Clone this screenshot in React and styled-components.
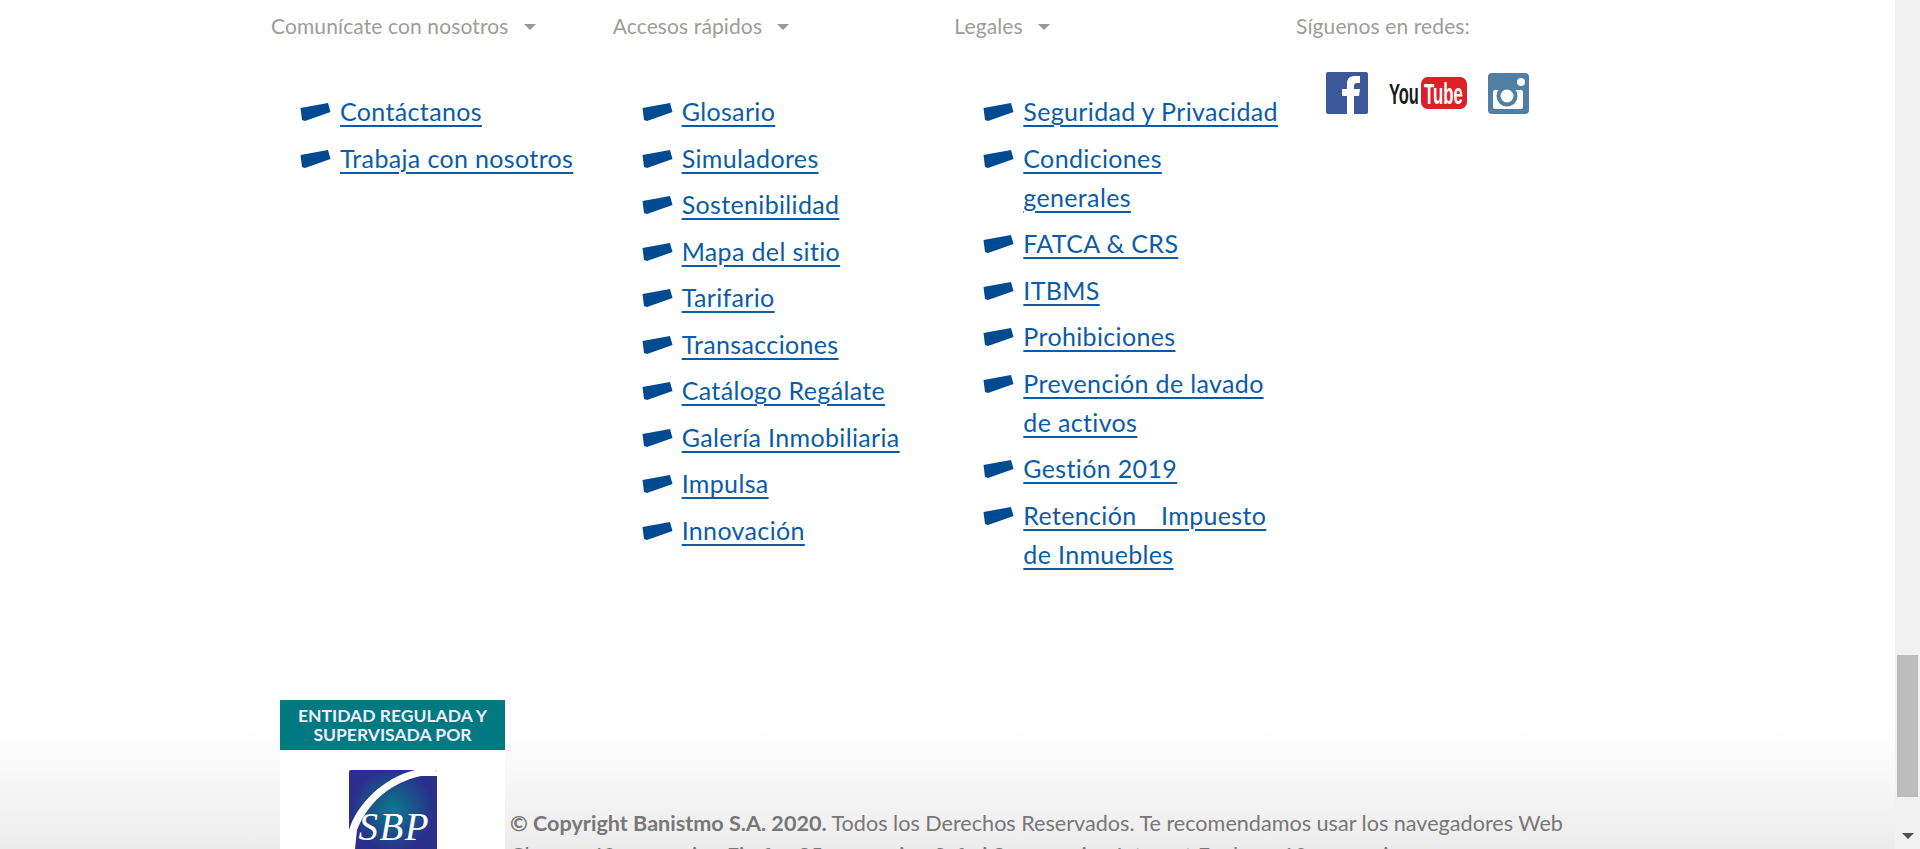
import React from "react";
import styled, { createGlobalStyle } from "styled-components";

const Global = createGlobalStyle`
  html, body { margin: 0; height: 100%; overflow: hidden; }
  body { font-family: "Lato", "Noto Sans", sans-serif; background: #fff; }
`;

const Page = styled.div`
  display: flex;
  width: 1920px;
  height: 849px;
  overflow: hidden;
`;
const Main = styled.main`
  flex: 1;
  height: 849px;
  overflow: hidden;
  background: linear-gradient(180deg, #fff 0, #fff 725px, #ececec 849px);
`;
const Columns = styled.div`
  display: grid;
  grid-template-columns: repeat(4, 341.67px);
  padding: 13px 0 0 271px;
  height: 700px;
  box-sizing: border-box;
`;
const Heading = styled.div`
  display: flex;
  align-items: center;
  gap: 15px;
  height: 25px;
  font-size: 21px;
  letter-spacing: 0.12px;
  color: #a09c98;
`;
const Caret = styled.span`
  width: 0;
  height: 0;
  border-left: 6px solid transparent;
  border-right: 6px solid transparent;
  border-top: 6px solid #999;
  margin-top: 3px;
`;
const List = styled.ul`
  list-style: none;
  margin: 0;
  padding: 54px 0 0 29px;
`;
const Item = styled.li`
  display: flex;
  gap: 9px;
  width: 300px;
  margin-bottom: 7.5px;
`;
const Bullet = styled.svg`
  flex: none;
  width: 31px;
  height: 19px;
  margin-top: 11px;
`;
const Link = styled.a`
  font-size: 25px;
  letter-spacing: 0.35px;
  line-height: 39px;
  color: #0a5cab;
  text-decoration: underline;
  text-decoration-thickness: 2px;
  text-underline-offset: 4px;
  width: ${p => p.$wrap ? "243px" : "auto"};
  white-space: ${p => p.$wrap ? "normal" : "nowrap"};
  ${p => p.$justify ? "text-align: justify;" : ""}
`;
const Social = styled.div`
  display: flex;
  align-items: center;
  padding: 34px 0 0 30px;
`;
const Footer = styled.div`
  display: flex;
  align-items: flex-start;
  padding-left: 280px;
`;
const Seal = styled.div`
  flex: none;
  width: 225px;
  height: 149px;
  background: #fff;
  display: flex;
  flex-direction: column;
  align-items: center;
`;
const SealBand = styled.div`
  width: 100%;
  height: 50px;
  background: #007a80;
  color: #eef;
  font: 700 17.5px/19px "Lato", sans-serif;
  text-align: center;
  padding-top: 6px;
  box-sizing: border-box;
`;
const SealLogo = styled.div`
  margin-top: 20px;
  width: 88px;
  height: 79px;
  background: radial-gradient(circle at 50% 50%, #0a7a88, #2a2f8c 70%);
  position: relative;
  overflow: hidden;
  border-radius: 2px 2px 0 0;
`;
const SealArc = styled.svg`
  position: absolute;
  inset: 0;
`;
const SealText = styled.span`
  position: absolute;
  left: 10px;
  top: 37px;
  font: italic 400 39px/40px "Liberation Serif", serif;
  letter-spacing: 1.5px;
  color: #fff;
`;
const Copy = styled.p`
  margin: 107px 0 0 5px;
  width: 1060px;
  font-size: 21.6px;
  line-height: 32px;
  color: #777;
`;
const Bar = styled.aside`
  flex: none;
  width: 25px;
  height: 849px;
  background: #f1f1f1;
  display: flex;
  flex-direction: column;
  align-items: center;
  padding-top: 655px;
  box-sizing: border-box;
`;
const Thumb = styled.div`
  width: 21px;
  height: 142px;
  background: #bdbdbd;
`;
const Arrow = styled.div`
  margin-top: 36px;
  width: 0;
  height: 0;
  border-left: 6px solid transparent;
  border-right: 6px solid transparent;
  border-top: 6px solid #505050;
`;

const columns = [
  { title: "Comunícate con nosotros", links: ["Contáctanos", "Trabaja con nosotros"] },
  { title: "Accesos rápidos", links: ["Glosario", "Simuladores", "Sostenibilidad", "Mapa del sitio", "Tarifario", "Transacciones", "Catálogo Regálate", "Galería Inmobiliaria", "Impulsa", "Innovación"] },
  { title: "Legales", links: ["Seguridad y Privacidad", "Condiciones generales", "FATCA & CRS", "ITBMS", "Prohibiciones", "Prevención de lavado de activos", "Gestión 2019", "Retención Impuesto de Inmuebles"] },
];
const wrapped = ["Condiciones generales", "Prevención de lavado de activos", "Retención Impuesto de Inmuebles"];

const Tag = () => (
  <Bullet viewBox="0 0 31 19">
    <path d="M0.5 5 L28 0 L30.5 9 L5 18 L2 17 Z" fill="#004a92" />
  </Bullet>
);

const Facebook = () => (
  <svg width="42" height="42" viewBox="0 0 42 42">
    <rect width="42" height="42" rx="2" fill="#3b5998" />
    <path d="M21 42V24h-5v-7h5v-5c0-6 3-8 8-8h5v7h-3c-2 0-3 1-3 3v3h6l-1 7h-5v18z" fill="#fff" />
  </svg>
);
const Youtube = () => (
  <svg width="78" height="32" viewBox="0 0 78 32" style={{ marginLeft: 21 }}>
    <rect x="32" y="0" width="46" height="32" rx="7" fill="#dc2028" />
    <text transform="translate(0 27) scale(.55 1)" fontFamily="Liberation Sans" fontWeight="700" fontSize="30" fill="#1b1b1b">You</text>
    <text transform="translate(35 27) scale(.56 1)" fontFamily="Liberation Sans" fontWeight="700" fontSize="30" fill="#fff">Tube</text>
  </svg>
);
const Instagram = () => (
  <svg width="41" height="41" viewBox="0 0 41 41" style={{ marginLeft: 21 }}>
    <rect width="41" height="41" rx="4" fill="#517fa4" />
    <rect x="5" y="17" width="30" height="19" rx="2" fill="#fff" />
    <circle cx="19" cy="23" r="10.5" fill="#517fa4" />
    <circle cx="19" cy="23" r="6.5" fill="#fff" />
    <circle cx="33" cy="9" r="4" fill="#fff" />
  </svg>
);

export default function App() {
  return (
    <Page>
      <Global />
      <Main>
        <Columns>
          {columns.map(col => (
            <div key={col.title}>
              <Heading>{col.title}<Caret /></Heading>
              <List>
                {col.links.map(l => (
                  <Item key={l}>
                    <Tag />
                    <Link href="#" $wrap={wrapped.includes(l)} $justify={l.startsWith("Retención")}>{l}</Link>
                  </Item>
                ))}
              </List>
            </div>
          ))}
          <div>
            <Heading>Síguenos en redes:</Heading>
            <Social><Facebook /><Youtube /><Instagram /></Social>
          </div>
        </Columns>
        <Footer>
          <Seal>
            <SealBand>ENTIDAD REGULADA Y<br />SUPERVISADA POR</SealBand>
            <SealLogo>
              <SealArc width="88" height="79" viewBox="0 0 88 79">
                <path d="M66 0 H88 V6 H72 C44 12 20 30 8 60 L6 79 L0 79 L0 60 C8 34 34 8 66 0 Z" fill="#fff" />
              </SealArc>
              <SealText>SBP</SealText>
            </SealLogo>
          </Seal>
          <Copy>
            <b>© Copyright Banistmo S.A. 2020.</b> Todos los Derechos Reservados. Te recomendamos usar los navegadores Web Chrome 40 o superior, Firefox 35 o superior, Safari 8 o superior, Internet Explorer 10 o superior.
          </Copy>
        </Footer>
      </Main>
      <Bar>
        <Thumb />
        <Arrow />
      </Bar>
    </Page>
  );
}
